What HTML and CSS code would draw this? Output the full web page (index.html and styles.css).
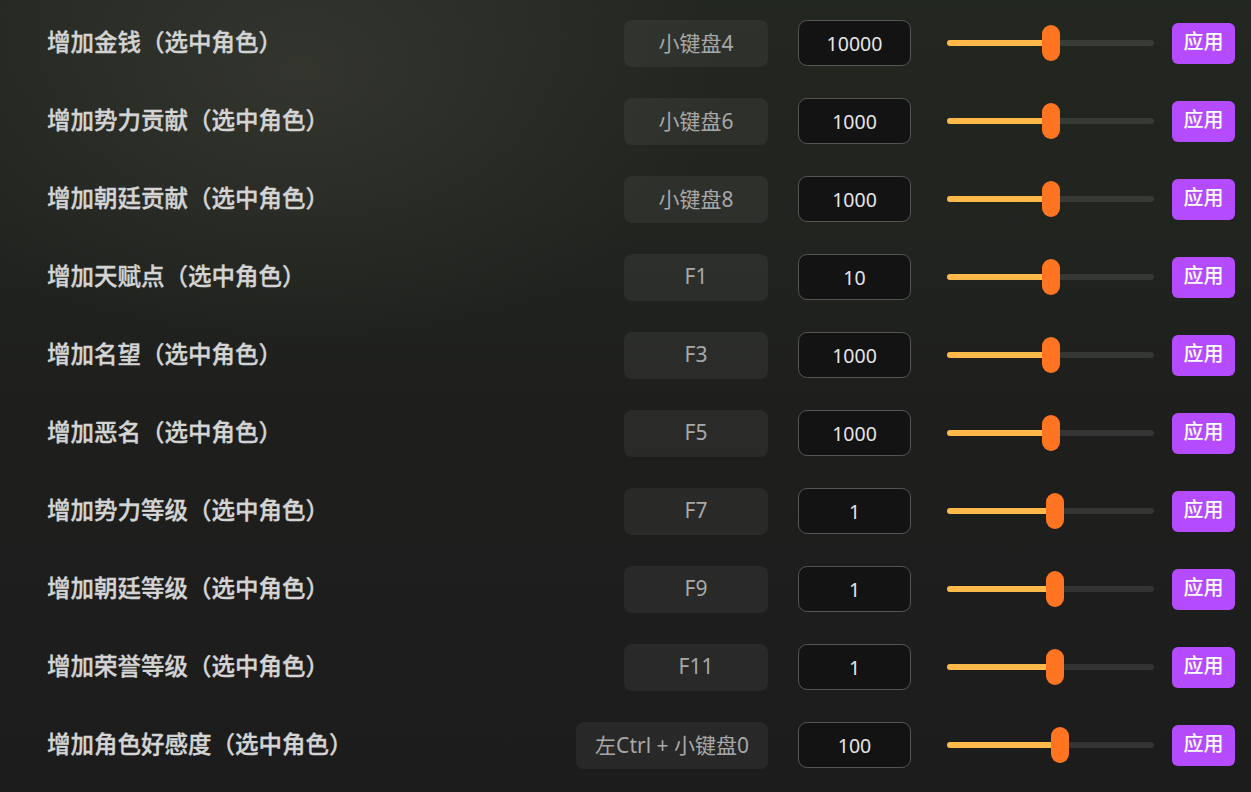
FILE: index.html
```html
<!DOCTYPE html>
<html lang="zh-CN">
<head>
<meta charset="utf-8">
<title>修改器</title>
<link rel="stylesheet" href="styles.css">
</head>
<body>
<div class="panel">
  <div class="row">
    <div class="label">增加金钱（选中角色）</div>
    <div class="key">小键盘4</div>
    <div class="num">10000</div>
    <div class="slider"><div class="fill" style="width:104px"></div><div class="thumb" style="left:95px"></div></div>
    <button class="apply">应用</button>
  </div>
  <div class="row">
    <div class="label">增加势力贡献（选中角色）</div>
    <div class="key">小键盘6</div>
    <div class="num">1000</div>
    <div class="slider"><div class="fill" style="width:104px"></div><div class="thumb" style="left:95px"></div></div>
    <button class="apply">应用</button>
  </div>
  <div class="row">
    <div class="label">增加朝廷贡献（选中角色）</div>
    <div class="key">小键盘8</div>
    <div class="num">1000</div>
    <div class="slider"><div class="fill" style="width:104px"></div><div class="thumb" style="left:95px"></div></div>
    <button class="apply">应用</button>
  </div>
  <div class="row">
    <div class="label">增加天赋点（选中角色）</div>
    <div class="key">F1</div>
    <div class="num">10</div>
    <div class="slider"><div class="fill" style="width:104px"></div><div class="thumb" style="left:95px"></div></div>
    <button class="apply">应用</button>
  </div>
  <div class="row">
    <div class="label">增加名望（选中角色）</div>
    <div class="key">F3</div>
    <div class="num">1000</div>
    <div class="slider"><div class="fill" style="width:104px"></div><div class="thumb" style="left:95px"></div></div>
    <button class="apply">应用</button>
  </div>
  <div class="row">
    <div class="label">增加恶名（选中角色）</div>
    <div class="key">F5</div>
    <div class="num">1000</div>
    <div class="slider"><div class="fill" style="width:104px"></div><div class="thumb" style="left:95px"></div></div>
    <button class="apply">应用</button>
  </div>
  <div class="row">
    <div class="label">增加势力等级（选中角色）</div>
    <div class="key">F7</div>
    <div class="num">1</div>
    <div class="slider"><div class="fill" style="width:108px"></div><div class="thumb" style="left:99px"></div></div>
    <button class="apply">应用</button>
  </div>
  <div class="row">
    <div class="label">增加朝廷等级（选中角色）</div>
    <div class="key">F9</div>
    <div class="num">1</div>
    <div class="slider"><div class="fill" style="width:108px"></div><div class="thumb" style="left:99px"></div></div>
    <button class="apply">应用</button>
  </div>
  <div class="row">
    <div class="label">增加荣誉等级（选中角色）</div>
    <div class="key">F11</div>
    <div class="num">1</div>
    <div class="slider"><div class="fill" style="width:108px"></div><div class="thumb" style="left:99px"></div></div>
    <button class="apply">应用</button>
  </div>
  <div class="row">
    <div class="label">增加角色好感度（选中角色）</div>
    <div class="key">左Ctrl + 小键盘0</div>
    <div class="num">100</div>
    <div class="slider"><div class="fill" style="width:113px"></div><div class="thumb" style="left:104px"></div></div>
    <button class="apply">应用</button>
  </div>
</div>
</body>
</html>
```
FILE: styles.css
```css
* { box-sizing: border-box; }
html, body { margin: 0; padding: 0; }
body {
  width: 1251px;
  height: 792px;
  overflow: hidden;
  font-family: "Noto Sans", "Noto Sans CJK SC", sans-serif;
  background-color: #1d1d1d;
  background-image:
    radial-gradient(ellipse 420px 280px at 300px 70px, rgba(72, 72, 64, 0.45), rgba(72, 72, 64, 0) 100%),
    linear-gradient(180deg, #22271f 0px, #21241f 200px, #1e1f1d 420px, #1c1c1c 792px);
}
.panel {
  display: flex;
  flex-direction: column;
  padding: 4px 16px 0 47px;
}
.row {
  height: 78px;
  display: flex;
  align-items: center;
}
.label {
  flex: 1;
  font-size: 23.5px;
  font-weight: 500;
  -webkit-text-stroke: 0.35px #d4d4d4;
  color: #d4d4d4;
  white-space: nowrap;
  padding-bottom: 5px;
}
.key {
  min-width: 144px;
  height: 47px;
  padding: 0 19px 3px;
  display: flex;
  align-items: center;
  justify-content: center;
  border-radius: 8px;
  background: rgba(255, 255, 255, 0.055);
  color: #a8a8a8;
  font-size: 21px;
  white-space: nowrap;
}
.num {
  margin-left: 30px;
  width: 113px;
  height: 46px;
  display: flex;
  align-items: center;
  justify-content: center;
  border-radius: 9px;
  border: 1.5px solid #545552;
  background: #131313;
  color: #e6e6e6;
  font-size: 19.5px;
  padding-top: 1px;
}
.slider {
  position: relative;
  margin-left: 36px;
  width: 207px;
  height: 6px;
  border-radius: 3px;
  background: rgba(255, 255, 255, 0.1);
}
.fill {
  height: 6px;
  border-radius: 3px;
  background: #ffb84a;
}
.thumb {
  position: absolute;
  top: -15px;
  width: 18px;
  height: 36px;
  border-radius: 9px;
  background: #ff7420;
}
.apply {
  margin-left: 18px;
  width: 63px;
  height: 41px;
  border: none;
  border-radius: 6px;
  background: #b44bff;
  color: #ffffff;
  font-family: "Noto Sans CJK SC", sans-serif;
  font-size: 20px;
  font-weight: 500;
  padding: 0 0 5px;
  line-height: 1;
}
```
